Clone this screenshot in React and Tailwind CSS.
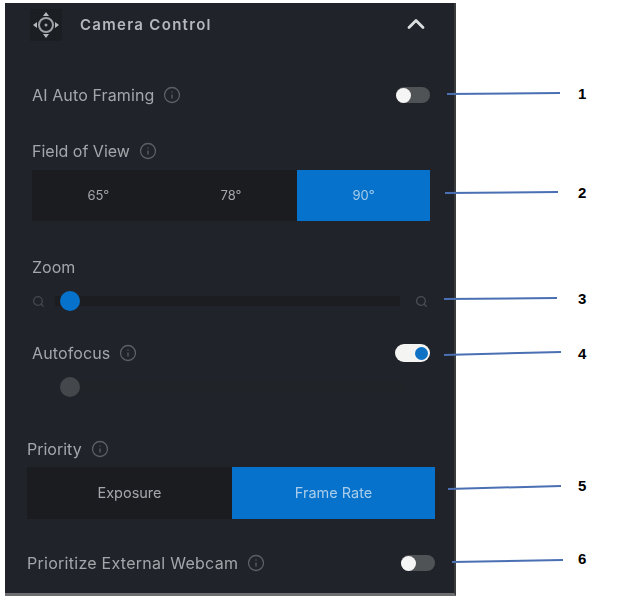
import React from "react";
import { Info, Search, ChevronUp } from "lucide-react";

const font = "font-['Inter','Liberation_Sans',sans-serif]";

function InfoIcon() {
  return <Info size={18} strokeWidth={1.7} className="ml-[9px] shrink-0 text-[#5c6064]" />;
}

function Label({ text, tracking = "tracking-[0.12px]" }) {
  return (
    <div className="flex items-center">
      <span className={`text-[16px] leading-6 text-[#a3a7ab] ${tracking}`}>{text}</span>
      <InfoIcon />
    </div>
  );
}

function Toggle({ on }) {
  if (on) {
    return (
      <div className="w-[35px] h-[18px] rounded-full bg-[#f4f4f2] flex items-center justify-end pr-[2px]">
        <div className="w-[13px] h-[13px] rounded-full bg-[#0e72c4]" />
      </div>
    );
  }
  return (
    <div className="w-[34px] h-[16px] rounded-full bg-[#505356] flex items-center">
      <div className="w-[15px] h-[15px] rounded-full bg-[#f5f5f5]" />
    </div>
  );
}

function Segments({ options, active, cols, height, size }) {
  return (
    <div className={`grid ${cols} ${height} ${size} bg-[#1a1c20] text-[#a4a8ac]`}>
      {options.map((o) => (
        <div
          key={o}
          className={`flex items-center justify-center ${o === active ? "bg-[#0672cb] text-[#a9cdea]" : ""}`}
        >
          {o}
        </div>
      ))}
    </div>
  );
}

function Slider({ disabled }) {
  return (
    <div className="relative h-5 flex items-center">
      {disabled ? (
        <div className="ml-[28px] w-[345px] h-[10px] bg-[#202327]" />
      ) : (
        <>
          <Search size={13} strokeWidth={2.4} className="text-[#44474b]" />
          <div className="ml-[10px] w-[345px] h-[10px] bg-[#1b1d21]" />
          <Search size={13} strokeWidth={2.4} className="ml-[15px] text-[#4b4e52]" />
        </>
      )}
      <div
        className={`absolute left-[28px] top-0 w-5 h-5 rounded-full ${disabled ? "bg-[#44474b]" : "bg-[#0672cb]"}`}
      />
    </div>
  );
}

const callouts = [
  { n: 1, x1: 447, y1: 94, x2: 560, y2: 93, y: 93 },
  { n: 2, x1: 445, y1: 193, x2: 558, y2: 192, y: 192 },
  { n: 3, x1: 444, y1: 299, x2: 557, y2: 298, y: 298 },
  { n: 4, x1: 444, y1: 355, x2: 561, y2: 352, y: 353 },
  { n: 5, x1: 448, y1: 489, x2: 561, y2: 486, y: 485 },
  { n: 6, x1: 452, y1: 562, x2: 563, y2: 560, y: 558 },
];

export default function App() {
  return (
    <div className={`relative w-[642px] h-[602px] bg-white overflow-hidden pt-[3px] pl-[5px] ${font}`}>
      {/* panel */}
      <div className="w-[451px] h-[593px] blur-[0.5px] bg-[#20242a] border-r-2 border-b-[3px] border-r-[#3a3c3e] border-b-[#6c6d6e] pl-[22px] pr-[19px] flex flex-col">
        {/* header */}
        <div className="h-[44px] flex items-center shrink-0">
          <div className="w-[32px] h-[32px] ml-[3px] flex items-center justify-center bg-[#1b1e23]">
            <svg width="30" height="30" viewBox="0 0 30 30" fill="none">
              <circle cx="15" cy="15" r="7" stroke="#9ea2a6" strokeWidth="2" />
              <path d="M15 2l-3 4h6zM15 28l-3-4h6zM2 15l4-3v6zM28 15l-4-3v6z" fill="#b4b8bc" />
              <circle cx="15" cy="15" r="1.5" fill="#9ea2a6" />
            </svg>
          </div>
          <span className="ml-[18px] text-[15px] font-semibold tracking-[1.3px] text-[#b4b8bc]">Camera Control</span>
          <ChevronUp size={28} strokeWidth={2.4} className="ml-auto mr-[5px] mb-[2px] text-[#dcdedf]" />
        </div>

        <div className="px-[5px]">
          <div className="mt-[36px] h-6 flex items-center justify-between">
            <Label text="AI Auto Framing" />
            <Toggle />
          </div>
          <div className="mt-[32px] h-6">
            <Label text="Field of View" tracking="tracking-normal" />
          </div>
          <div className="mt-[7px]">
            <Segments options={["65°", "78°", "90°"]} active="90°" cols="grid-cols-3" height="h-[51px]" size="text-[13px]" />
          </div>
          <div className="mt-[34px] h-6">
            <span className="text-[16px] leading-6 text-[#a3a7ab]">Zoom</span>
          </div>
          <div className="mt-3">
            <Slider />
          </div>
          <div className="mt-[30px] h-6 flex items-center justify-between">
            <Label text="Autofocus" />
            <Toggle on />
          </div>
          <div className="mt-3">
            <Slider disabled />
          </div>
        </div>

        <div className="mt-[40px] h-6">
          <Label text="Priority" tracking="tracking-normal" />
        </div>
        <div className="mt-[6px]">
          <Segments options={["Exposure", "Frame Rate"]} active="Frame Rate" cols="grid-cols-[205px_203px]" height="h-[52px]" size="text-[14.5px]" />
        </div>
        <div className="mt-[32px] h-6 flex items-center justify-between">
          <Label text="Prioritize External Webcam" tracking="tracking-[0.27px]" />
          <Toggle />
        </div>
      </div>

      {/* callout lines and numbers */}
      <svg className="absolute left-0 top-0" width="642" height="602" fill="none">
        {callouts.map((c) => (
          <line key={c.n} x1={c.x1} y1={c.y1} x2={c.x2} y2={c.y2} stroke="#4a6fb3" strokeWidth="2" />
        ))}
      </svg>
      {callouts.map((c) => (
        <span
          key={c.n}
          className="absolute left-[578px] -translate-y-1/2 text-[15px] font-bold leading-none text-black font-['Liberation_Sans',sans-serif]"
          style={{ top: c.y }}
        >
          {c.n}
        </span>
      ))}
    </div>
  );
}
